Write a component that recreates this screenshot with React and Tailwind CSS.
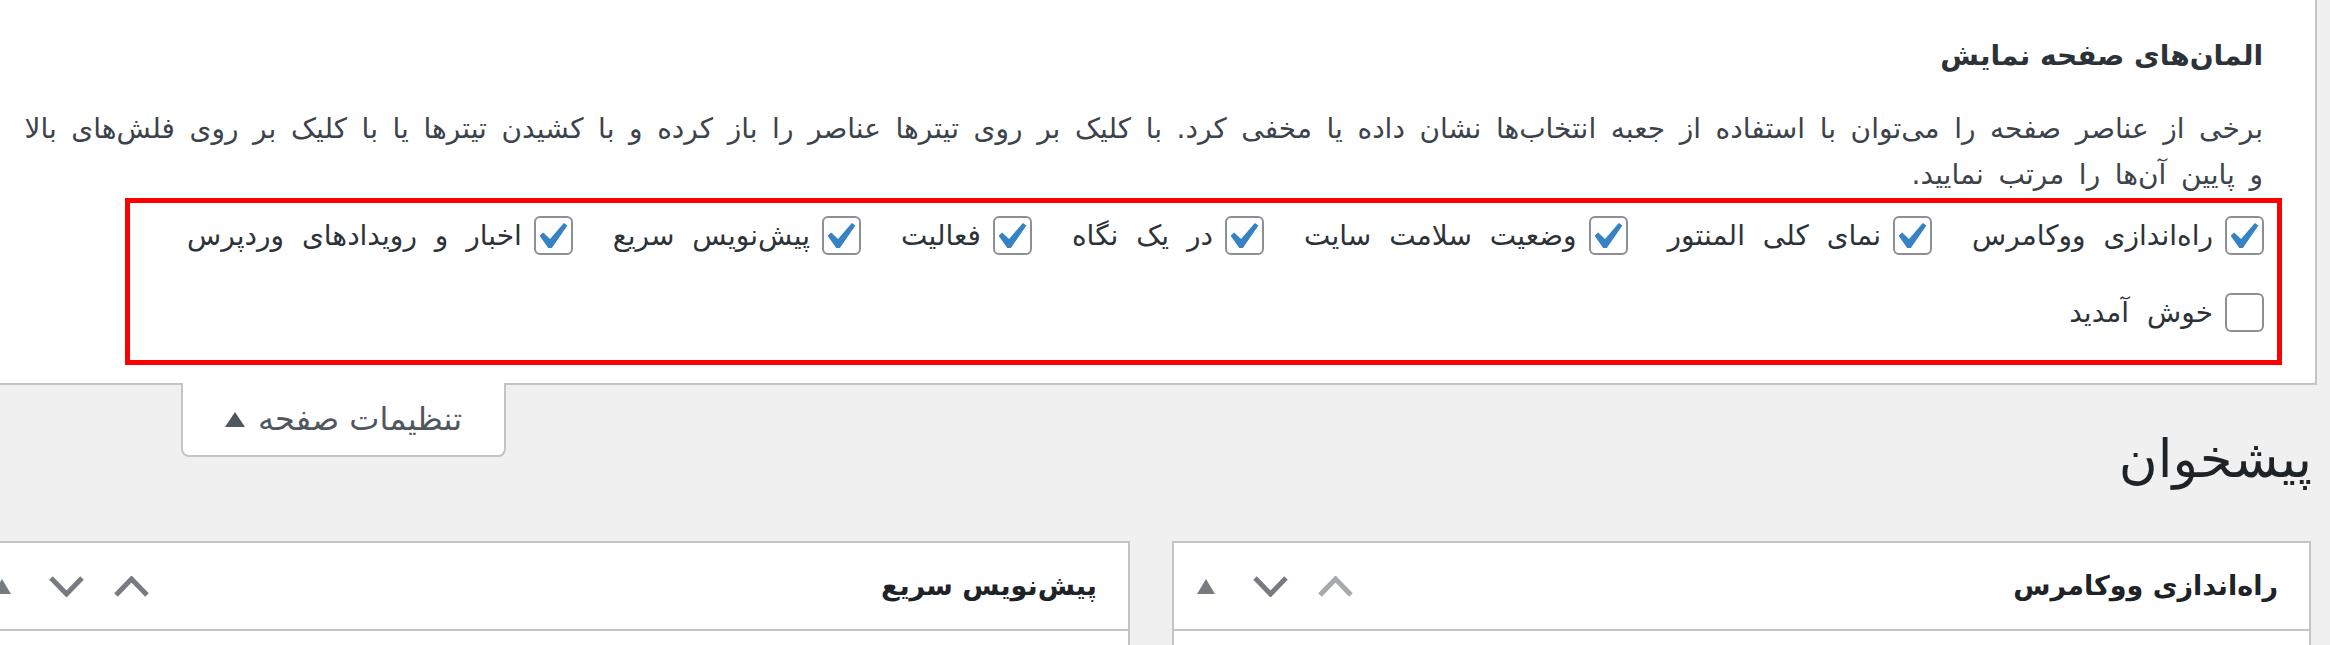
const FONT = "font-['DejaVu_Sans',sans-serif]"

const OPTIONS_ROW_1 = [
  { label: 'راه‌اندازی ووکامرس', checked: true },
  { label: 'نمای کلی المنتور', checked: true },
  { label: 'وضعیت سلامت سایت', checked: true },
  { label: 'در یک نگاه', checked: true },
  { label: 'فعالیت', checked: true },
  { label: 'پیش‌نویس سریع', checked: true },
  { label: 'اخبار و رویدادهای وردپرس', checked: true },
]

const OPTIONS_ROW_2 = [{ label: 'خوش آمدید', checked: false }]

function Checkbox({ checked }) {
  return (
    <span className="flex h-[39px] w-[39px] shrink-0 items-center justify-center rounded-[6px] border-2 border-[#8c8f94] bg-white">
      {checked ? (
        <svg viewBox="5.78 4.89 10.39 9.32" className="h-[25px] w-[29px]">
          <path d="M14.83 4.89l1.34.94-5.81 8.38H9.02L5.78 9.67l1.34-1.25 2.57 2.4z" fill="#3582c4" />
        </svg>
      ) : null}
    </span>
  )
}

function OptionRow({ items }) {
  return (
    <div className="flex h-[39px] items-center gap-[40px]">
      {items.map((item) => (
        <label key={item.label} className="flex items-center gap-[12px] whitespace-nowrap text-[28px] leading-[39px] text-[#2c3338] [word-spacing:9px]">
          <Checkbox checked={item.checked} />
          <span>{item.label}</span>
        </label>
      ))}
    </div>
  )
}

function ChevronDown({ color }) {
  return (
    <svg viewBox="0 0 35 21" className="h-[21px] w-[35px]">
      <polyline points="2,2 17.5,18 33,2" fill="none" stroke={color} strokeWidth="5" />
    </svg>
  )
}

function ChevronUp({ color }) {
  return (
    <svg viewBox="0 0 35 21" className="h-[21px] w-[35px]">
      <polyline points="2,19 17.5,3 33,19" fill="none" stroke={color} strokeWidth="5" />
    </svg>
  )
}

function Postbox({ title, width, upColor }) {
  return (
    <div className={`shrink-0 border-2 border-[#c3c4c7] bg-white ${width}`}>
      <div className="flex h-[88px] items-center justify-between border-b-2 border-[#c3c4c7] pr-[31px] pl-[23px]">
        <h2 className="text-[27px] leading-[40px] font-semibold text-[#1d2327]">{title}</h2>
        <div className="flex items-center">
          <span className="flex items-center">
            <ChevronUp color={upColor} />
          </span>
          <span className="mr-[30px] flex items-center">
            <ChevronDown color="#787c82" />
          </span>
          <svg viewBox="0 0 18 15" className="mr-[38px] h-[15px] w-[18px]">
            <polygon points="9,0 18,15 0,15" fill="#787c82" />
          </svg>
        </div>
      </div>
      <div className="h-[200px]" />
    </div>
  )
}

export default function App() {
  return (
    <div dir="rtl" className={`h-[645px] w-[2330px] overflow-hidden bg-[#f0f0f1] ${FONT}`}>
      <div className="mr-[13px] border-r-2 border-b-2 border-[#c3c4c7] bg-white">
        <div className="pt-[40px] pr-[52px] pl-[20px]">
          <h5 className="text-[28px] leading-[32px] font-semibold text-[#2c3338]">المان‌های صفحه نمایش</h5>
          <p className="mt-[34px] text-[28px] leading-[46px] whitespace-nowrap text-[#3c434a] [word-spacing:5.7px]">
            برخی از عناصر صفحه را می‌توان با استفاده از جعبه انتخاب‌ها نشان داده یا مخفی کرد. با کلیک بر روی تیترها عناصر را باز کرده و با کشیدن تیترها یا با کلیک بر روی فلش‌های بالا
            <br />
            و پایین آن‌ها را مرتب نمایید.
          </p>
        </div>
        <div className="mr-[33px] mb-[18px] ml-[125px] flex flex-col gap-[38px] border-[5px] border-[#ff0000] pt-[13px] pr-[13px] pb-[28px]">
          <OptionRow items={OPTIONS_ROW_1} />
          <OptionRow items={OPTIONS_ROW_2} />
        </div>
      </div>

      <div className="flex h-[156px] items-start justify-between pr-[18px] pl-[181px]">
        <h1 className="mt-[46px] text-[53px] leading-[56px] text-[#1d2327]">پیشخوان</h1>
        <div className="-mt-[2px] flex h-[74px] w-[325px] items-center justify-center gap-[13px] rounded-b-[8px] border-x-2 border-b-2 border-[#c3c4c7] bg-white text-[32px] leading-[40px] text-[#50575e]">
          <span>تنظیمات صفحه</span>
          <svg viewBox="0 0 20 15" className="h-[15px] w-[20px]">
            <polygon points="10,0 20,15 0,15" fill="#50575e" />
          </svg>
        </div>
      </div>

      <div className="flex gap-[42px] pr-[19px]">
        <Postbox title="راه‌اندازی ووکامرس" width="w-[1139px]" upColor="#a7aaad" />
        <Postbox title="پیش‌نویس سریع" width="w-[1162px]" upColor="#787c82" />
      </div>
    </div>
  )
}
